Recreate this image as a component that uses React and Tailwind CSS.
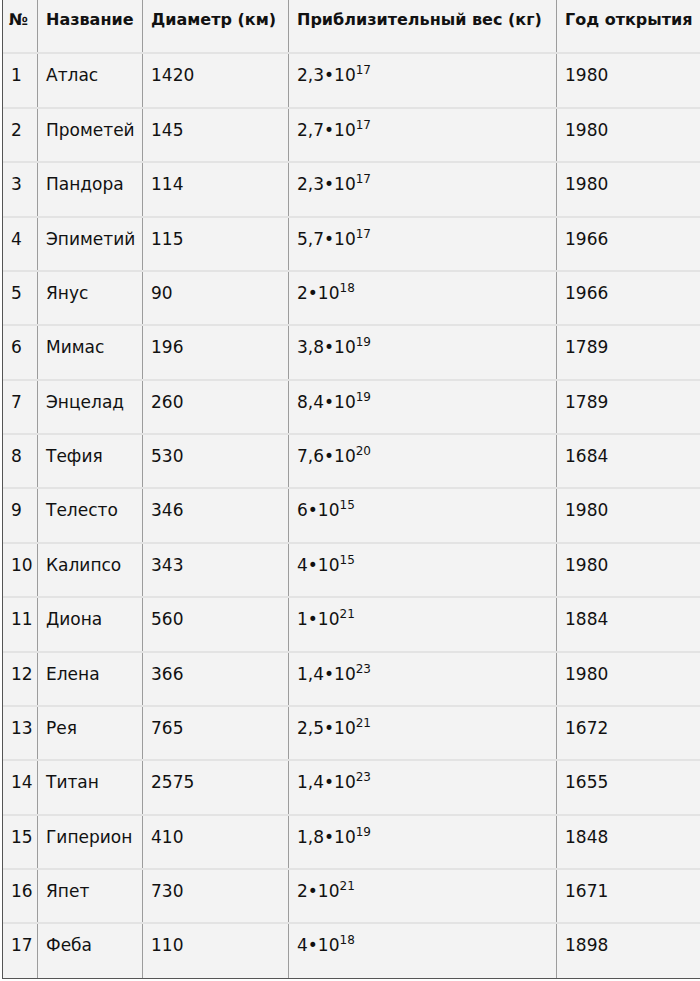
import React from 'react';

const rows = [
  ['1', 'Атлас', '1420', '2,3', '17', '1980'],
  ['2', 'Прометей', '145', '2,7', '17', '1980'],
  ['3', 'Пандора', '114', '2,3', '17', '1980'],
  ['4', 'Эпиметий', '115', '5,7', '17', '1966'],
  ['5', 'Янус', '90', '2', '18', '1966'],
  ['6', 'Мимас', '196', '3,8', '19', '1789'],
  ['7', 'Энцелад', '260', '8,4', '19', '1789'],
  ['8', 'Тефия', '530', '7,6', '20', '1684'],
  ['9', 'Телесто', '346', '6', '15', '1980'],
  ['10', 'Калипсо', '343', '4', '15', '1980'],
  ['11', 'Диона', '560', '1', '21', '1884'],
  ['12', 'Елена', '366', '1,4', '23', '1980'],
  ['13', 'Рея', '765', '2,5', '21', '1672'],
  ['14', 'Титан', '2575', '1,4', '23', '1655'],
  ['15', 'Гиперион', '410', '1,8', '19', '1848'],
  ['16', 'Япет', '730', '2', '21', '1671'],
  ['17', 'Феба', '110', '4', '18', '1898'],
];

const grid = 'grid grid-cols-[34px_105px_146px_268px_1fr] h-[54.375px] border-b-2 border-[#e3e3e3]';
const cell = 'pl-[8px] pt-[11px] border-l border-[#9c9c9c] whitespace-nowrap overflow-hidden';

export default function App() {
  return (
    <div className="w-[700px] h-[981px] bg-white overflow-hidden" style={{ fontFamily: '"DejaVu Sans", sans-serif' }}>
      <div className="ml-[2px] w-[720px] bg-[#f3f3f3] border-l border-[#555] text-[17px] leading-[20px] text-[#111]">
        {/* header */}
        <div className={grid + ' font-bold text-[16px]'}>
          <div className="pl-[6px] pt-[10px]">№</div>
          <div className={cell + ' !pt-[10px]'}>Название</div>
          <div className={cell + ' !pt-[10px]'}>Диаметр (км)</div>
          <div className={cell + ' !pt-[10px]'}>Приблизительный вес (кг)</div>
          <div className={cell + ' !pt-[10px]'}>Год открытия</div>
        </div>
        {rows.map((r, i) => (
          <div key={r[0]} className={grid + (i === rows.length - 1 ? ' !border-[#555] !border-b' : '')}>
            <div className="pl-[8px] pt-[11px]">{r[0]}</div>
            <div className={cell}>{r[1]}</div>
            <div className={cell}>{r[2]}</div>
            <div className={cell}>
              {r[3]}•10<sup className="text-[12px] relative -top-[7px]">{r[4]}</sup>
            </div>
            <div className={cell}>{r[5]}</div>
          </div>
        ))}
      </div>
    </div>
  );
}
